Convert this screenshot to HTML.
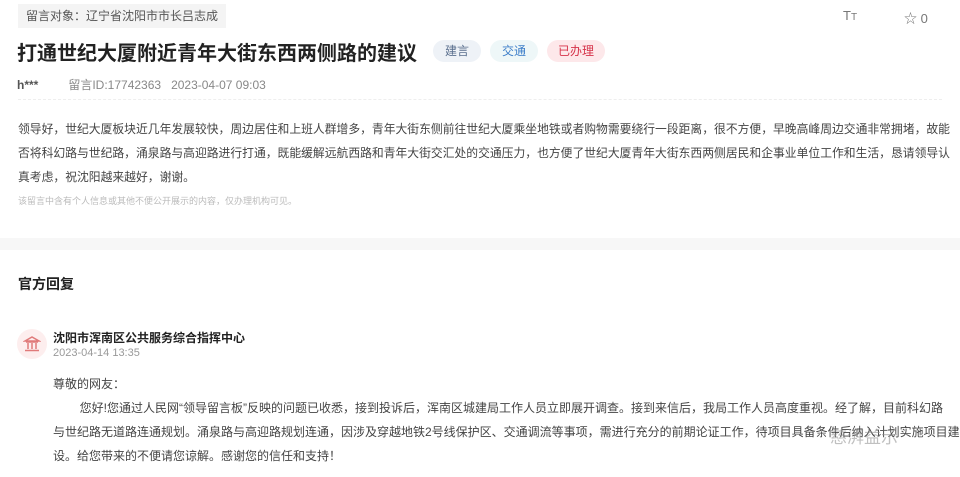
<!DOCTYPE html>
<html><head><meta charset="utf-8"><style>
body{margin:0;width:960px;height:477px;overflow:hidden;background:#fff;font-family:"Liberation Sans","Noto Sans CJK SC",sans-serif;color:#333;position:relative}
.a{position:absolute;white-space:nowrap}
.pill{position:absolute;height:22px;line-height:22px;border-radius:11px;font-size:12px;text-align:center}
</style></head><body>
<div class="a" style="left:18px;top:4px;height:24px;line-height:24px;padding:0 8px;background:#f4f4f4;font-size:12px;color:#555">留言对象：辽宁省沈阳市市长吕志成</div>
<div class="a" style="left:843px;top:8px;font-size:13px;color:#777">T<span style="font-size:10px">T</span></div>
<div class="a" style="left:904px;top:8px;font-size:13px;color:#777">☆ 0</div>
<div class="a" style="left:17px;top:37px;font-size:20px;font-weight:bold;color:#222">打通世纪大厦附近青年大街东西两侧路的建议</div>
<div class="pill" style="left:433px;top:40px;width:48px;background:#eef2f7;color:#5a6f8e">建言</div>
<div class="pill" style="left:490px;top:40px;width:48px;background:#eef7f8;color:#3e7fc9">交通</div>
<div class="pill" style="left:547px;top:40px;width:58px;background:#fde8ea;color:#d6334a">已办理</div>
<div class="a" style="left:17px;top:76px;font-size:12px;color:#555"><b>h***</b><span style="margin-left:30px;color:#888">留言ID:17742363&nbsp;&nbsp;&nbsp;2023-04-07 09:03</span></div>
<div style="position:absolute;left:18px;right:18px;top:99px;border-top:1px dashed #eee"></div>
<div class="a" style="left:18px;top:117px;font-size:11.8px;line-height:24px;color:#444">领导好，世纪大厦板块近几年发展较快，周边居住和上班人群增多，青年大街东侧前往世纪大厦乘坐地铁或者购物需要绕行一段距离，很不方便，早晚高峰周边交通非常拥堵，故能<br>否将科幻路与世纪路，涌泉路与高迎路进行打通，既能缓解远航西路和青年大街交汇处的交通压力，也方便了世纪大厦青年大街东西两侧居民和企事业单位工作和生活，恳请领导认<br>真考虑，祝沈阳越来越好，谢谢。</div>
<div class="a" style="left:18px;top:194px;font-size:9px;color:#bbb">该留言中含有个人信息或其他不便公开展示的内容，仅办理机构可见。</div>
<div style="position:absolute;left:0;right:0;top:238px;height:12px;background:#f7f7f7"></div>
<div class="a" style="left:18px;top:274px;font-size:14px;font-weight:bold;color:#222">官方回复</div>
<div style="position:absolute;left:17px;top:329px;width:30px;height:30px;border-radius:50%;background:#fdeeee"></div>
<svg class="a" style="left:23px;top:335px" width="18" height="18" viewBox="0 0 18 18" fill="none" stroke="#e07a7a" stroke-width="1.5"><path d="M2 6 L9 2 L16 6 Z M3 7h12 M5 8v6 M9 8v6 M13 8v6 M2 15.5h14"/></svg>
<div class="a" style="left:53px;top:329px;font-size:12px;font-weight:bold;color:#222">沈阳市浑南区公共服务综合指挥中心</div>
<div class="a" style="left:53px;top:347px;font-size:11px;color:#999">2023-04-14 13:35</div>
<div class="a" style="left:53px;top:372px;font-size:12px;line-height:24px;color:#444">尊敬的网友：<br>&nbsp;&nbsp;&nbsp;&nbsp;&nbsp;&nbsp;&nbsp;&nbsp;您好!您通过人民网“领导留言板”反映的问题已收悉，接到投诉后，浑南区城建局工作人员立即展开调查。接到来信后，我局工作人员高度重视。经了解，目前科幻路<br>与世纪路无道路连通规划。涌泉路与高迎路规划连通，因涉及穿越地铁2号线保护区、交通调流等事项，需进行充分的前期论证工作，待项目具备条件后纳入计划实施项目建<br>设。给您带来的不便请您谅解。感谢您的信任和支持！</div>
<div class="a" style="left:830px;top:423px;font-size:17px;color:rgba(140,140,140,0.55)">慈湃益示</div>
</body></html>
